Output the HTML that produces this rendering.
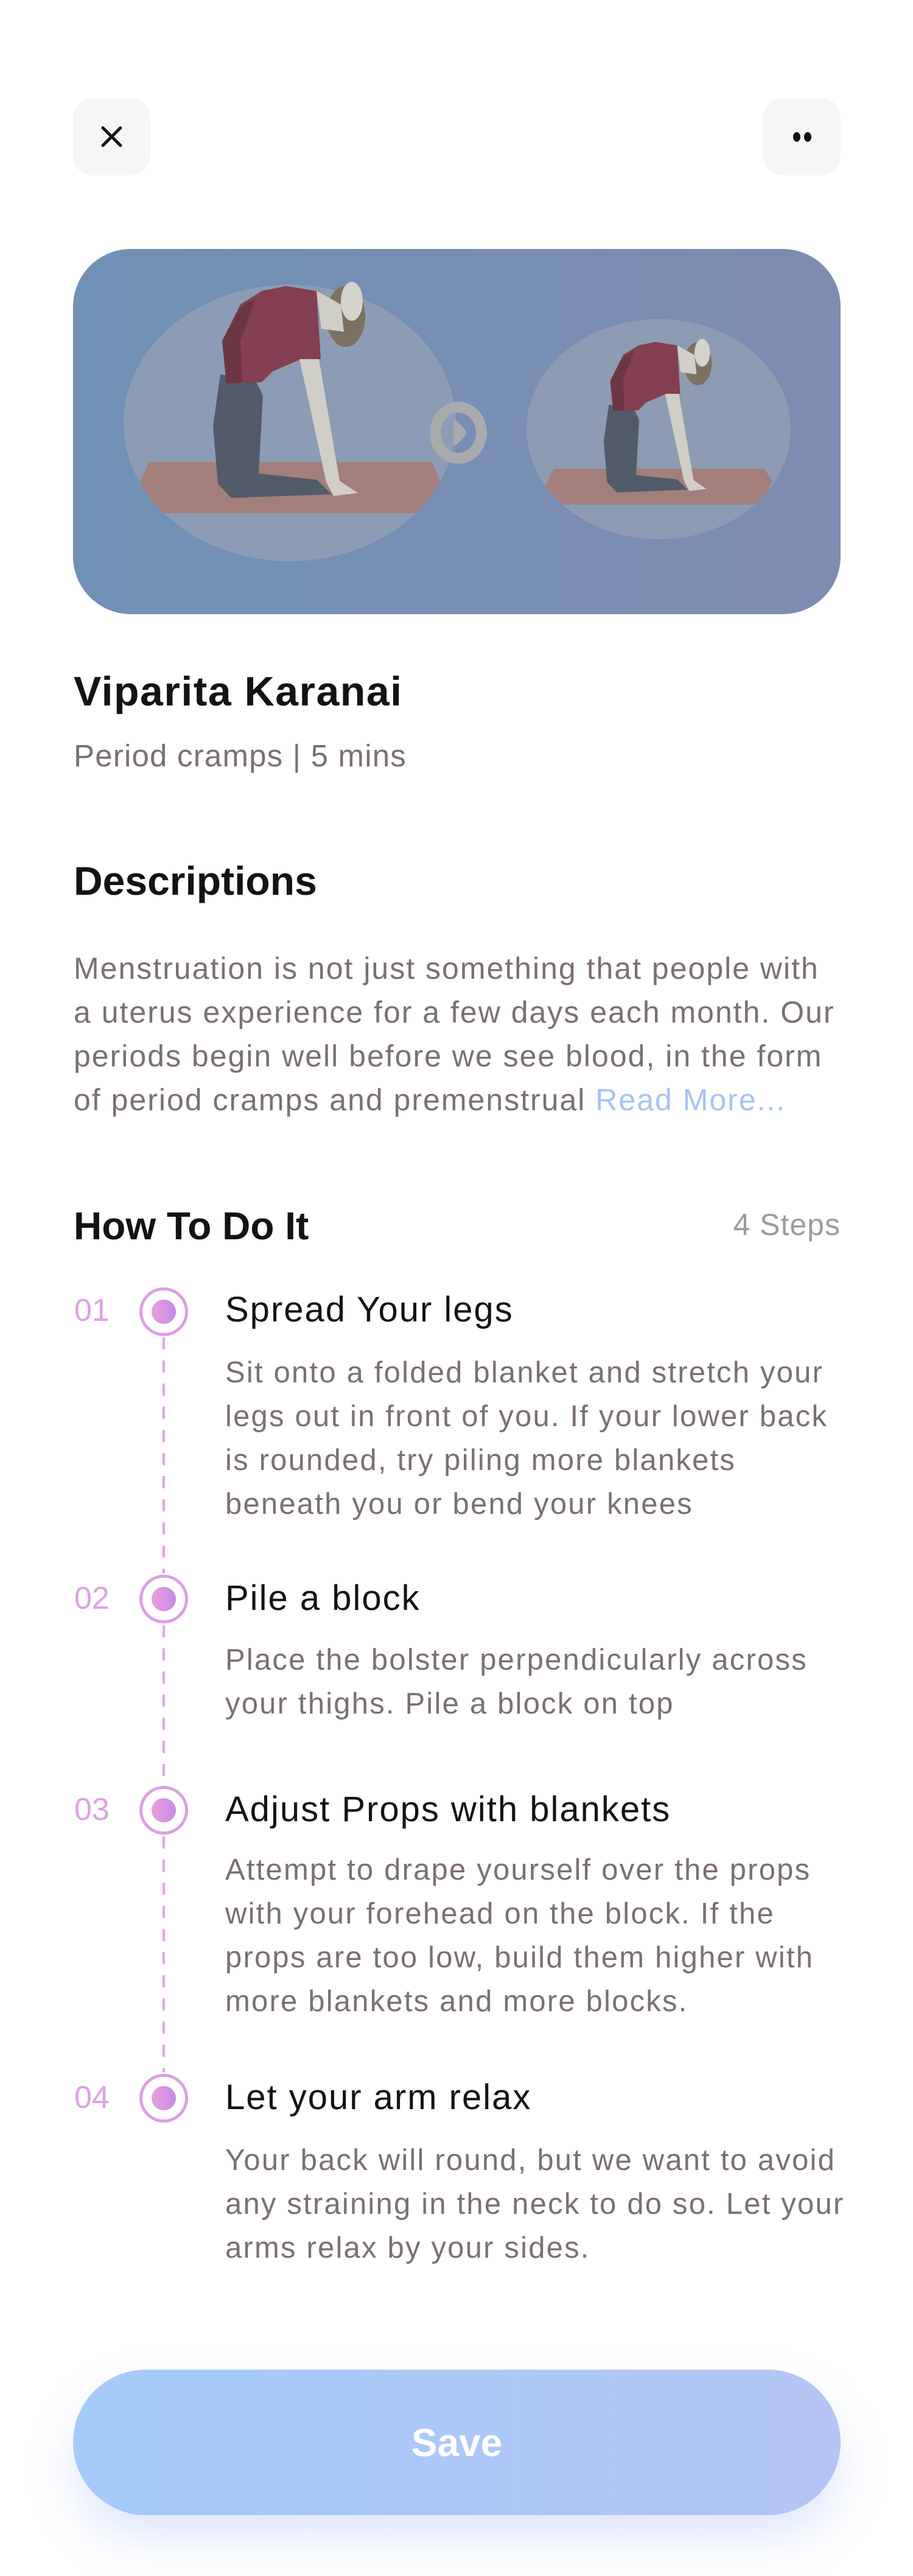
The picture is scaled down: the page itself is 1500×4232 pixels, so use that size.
<!DOCTYPE html>
<html><head><meta charset="utf-8">
<style>
*{margin:0;padding:0;box-sizing:border-box}
html,body{width:1500px;height:4232px;background:#fff;overflow:hidden}
body{position:relative;font-family:"Liberation Sans",sans-serif}
.abs{position:absolute}
.btn{position:absolute;top:161px;width:127px;height:127px;background:#f5f6f6;border-radius:32px}
.t{position:absolute;white-space:nowrap}
.grey{color:#7b6f75}
.num{position:absolute;left:122px;color:#dca2e4;font-size:52px;line-height:60px}
.ring{position:absolute;left:229px;width:80px;height:80px;border:5px solid #dc9fe6;border-radius:50%;background:#fff}
.ring:after{content:"";position:absolute;left:15px;top:15px;width:40px;height:40px;border-radius:50%;background:linear-gradient(90deg,#e7a0dc,#c78ae9)}
.stitle{position:absolute;left:370px;font-size:58px;letter-spacing:2px;color:#151214;line-height:64px;white-space:nowrap}
.sdesc{position:absolute;left:370px;font-size:49px;letter-spacing:2.2px;line-height:72px;color:#7b6f75;white-space:nowrap}
.dash{position:absolute;left:267px;width:4px;background:repeating-linear-gradient(#e2a3ea 0 20px,transparent 20px 38px)}
</style></head><body>

<div class="btn" style="left:120px">
<svg width="127" height="127" viewBox="0 0 127 127"><path d="M49 49 L78 78 M78 49 L49 78" stroke="#151214" stroke-width="5" stroke-linecap="round"/></svg>
</div>
<div class="btn" style="left:1254px">
<svg width="127" height="127" viewBox="0 0 127 127"><ellipse cx="55" cy="64" rx="6" ry="8" fill="#151214"/><ellipse cx="73" cy="64" rx="6" ry="8" fill="#151214"/></svg>
</div>

<svg class="abs" style="left:120px;top:409px" width="1261" height="600" viewBox="120 409 1261 600">
<defs>
<linearGradient id="bg" x1="0" x2="1"><stop offset="0" stop-color="#7190b5"/><stop offset="1" stop-color="#7d8cb0"/></linearGradient>
<clipPath id="cl"><rect x="120" y="409" width="1261" height="600" rx="95"/></clipPath>
<clipPath id="e1"><ellipse cx="476" cy="695" rx="273" ry="227"/></clipPath>
<clipPath id="e2"><ellipse cx="1082" cy="705" rx="217" ry="181"/></clipPath>
<g id="fig">
<polygon points="350,700 362,615 420,625 432,650 425,778 520,788 545,812 380,818 358,795" fill="#525b6a"/>
<polygon points="372,630 365,560 395,500 430,478 470,470 520,478 527,590 490,592 448,610 430,628" fill="#843f52"/>
<polygon points="372,630 365,560 395,505 420,490 395,560 398,628" fill="#6c3645"/>
<polygon points="492,590 524,590 558,790 588,810 548,815 536,792" fill="#cfcec7"/>
<ellipse cx="568" cy="520" rx="32" ry="50" fill="#7d7160"/>
<ellipse cx="578" cy="495" rx="18" ry="32" fill="#d4d3cc"/>
<polygon points="520,478 560,500 565,545 528,540" fill="#cfcec7"/>
</g>
</defs>
<g clip-path="url(#cl)">
<rect x="120" y="409" width="1261" height="600" fill="url(#bg)"/>
<ellipse cx="476" cy="695" rx="273" ry="227" fill="#8c9cb4"/>
<ellipse cx="1082" cy="705" rx="217" ry="181" fill="#8d9bb3"/>
<polygon points="226,800 245,759 710,759 723,790 700,843 250,843" fill="#a27f7a" clip-path="url(#e1)"/>
<polygon points="895,800 910,770 1255,770 1269,790 1250,829 915,829" fill="#a27f7a" clip-path="url(#e2)"/>
<use href="#fig"/>
<g transform="translate(989,554) scale(0.71) translate(-346,-459)"><use href="#fig"/></g>
<ellipse cx="753" cy="711" rx="38" ry="42" fill="none" stroke="#a9aaac" stroke-width="18"/>
<path d="M745 694 Q745 688 751 692 L764 706 Q768 711 764 716 L751 730 Q745 734 745 728 Z" fill="#a9aaac"/>
</g>
</svg>

<div class="t" style="left:121px;top:1096px;font-size:68px;letter-spacing:1.5px;font-weight:bold;color:#151214;line-height:80px">Viparita Karanai</div>
<div class="t grey" style="left:121px;top:1212px;font-size:51px;letter-spacing:1.2px;line-height:60px">Period cramps | 5 mins</div>

<div class="t" style="left:121px;top:1407px;font-size:66px;font-weight:bold;color:#151214;line-height:80px">Descriptions</div>
<div class="abs grey" style="left:121px;top:1555px;white-space:nowrap;font-size:50px;letter-spacing:2px;line-height:72px">Menstruation is not just something that people with<br>a uterus experience for a few days each month. Our<br>periods begin well before we see blood, in the form<br>of period cramps and premenstrual <span style="color:#a6c3f6">Read More...</span></div>

<div class="t" style="left:121px;top:1976px;font-size:64px;font-weight:bold;color:#151214;line-height:76px">How To Do It</div>
<div class="t" style="right:119px;top:1982px;font-size:50px;letter-spacing:1px;color:#a09a9d;line-height:60px">4 Steps</div>

<div class="dash" style="top:2197px;height:388px"></div>
<div class="dash" style="top:2670px;height:263px"></div>
<div class="dash" style="top:3017px;height:388px"></div>

<div class="num" style="top:2123px">01</div>
<div class="ring" style="top:2115px"></div>
<div class="stitle" style="top:2120px">Spread Your legs</div>
<div class="sdesc" style="top:2219px">Sit onto a folded blanket and stretch your<br>legs out in front of you. If your lower back<br>is rounded, try piling more blankets<br>beneath you or bend your knees</div>

<div class="num" style="top:2596px">02</div>
<div class="ring" style="top:2587px"></div>
<div class="stitle" style="top:2594px">Pile a block</div>
<div class="sdesc" style="top:2691px">Place the bolster perpendicularly across<br>your thighs. Pile a block on top</div>

<div class="num" style="top:2943px">03</div>
<div class="ring" style="top:2934px"></div>
<div class="stitle" style="top:2941px">Adjust Props with blankets</div>
<div class="sdesc" style="top:3036px">Attempt to drape yourself over the props<br>with your forehead on the block. If the<br>props are too low, build them higher with<br>more blankets and more blocks.</div>

<div class="num" style="top:3416px">04</div>
<div class="ring" style="top:3407px"></div>
<div class="stitle" style="top:3414px">Let your arm relax</div>
<div class="sdesc" style="top:3513px">Your back will round, but we want to avoid<br>any straining in the neck to do so. Let your<br>arms relax by your sides.</div>

<div class="abs" style="left:120px;top:3893px;width:1261px;height:239px;border-radius:120px;background:linear-gradient(90deg,#a5cbfb,#b4c5f5);box-shadow:0 40px 70px rgba(170,190,250,0.35);display:flex;align-items:center;justify-content:center;color:#fff;font-size:64px;font-weight:bold">Save</div>

</body></html>
